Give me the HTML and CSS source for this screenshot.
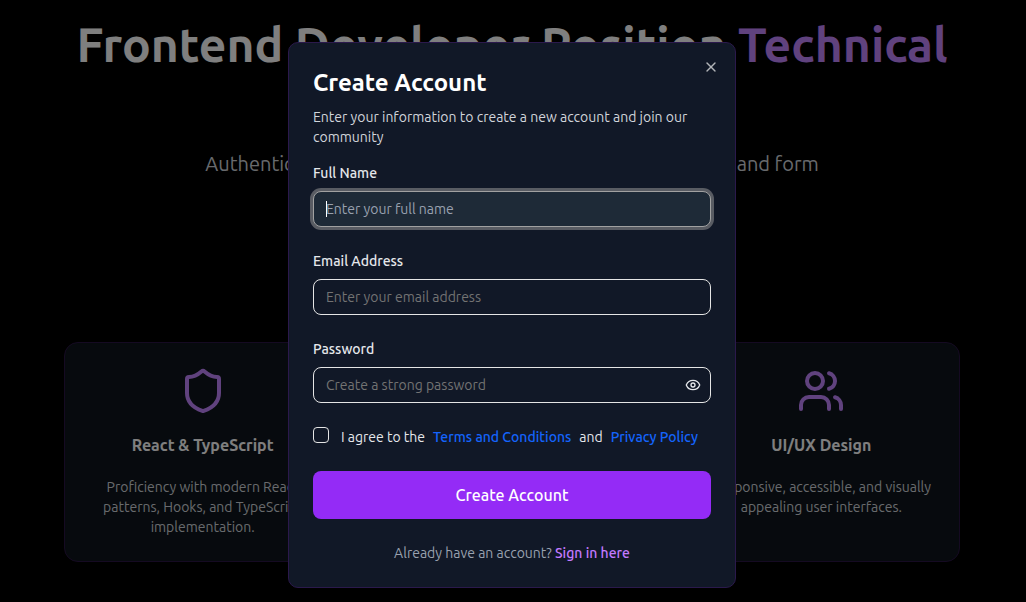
FILE: index.html
```html
<!DOCTYPE html>
<html lang="en">
<head>
<meta charset="utf-8">
<meta name="viewport" content="width=device-width, initial-scale=1">
<title>Create Account</title>
<link rel="stylesheet" href="styles.css">
</head>
<body>
<main class="page">
  <section class="hero">
    <h1 class="hero-title">Frontend Developer Position <span class="accent">Technical</span></h1>
    <p class="hero-text">Authentication system with clean, accessible modal dialogs and form</p>
  </section>
  <section class="cards">
    <article class="card">
      <svg class="card-icon" viewBox="0 0 24 24" aria-hidden="true"><path d="M20 13c0 5-3.5 7.5-7.66 8.95a1 1 0 0 1-.67-.01C7.5 20.5 4 18 4 13V6a1 1 0 0 1 1-1c2 0 4.5-1.2 6.24-2.72a1.17 1.17 0 0 1 1.52 0C14.51 3.81 17 5 19 5a1 1 0 0 1 1 1z"/></svg>
      <h2 class="card-title">React &amp; TypeScript</h2>
      <p class="card-text">Proficiency with modern React patterns, Hooks, and TypeScript implementation.</p>
    </article>
    <article class="card"></article>
    <article class="card">
      <svg class="card-icon" viewBox="0 0 24 24" aria-hidden="true"><path d="M16 21v-2a4 4 0 0 0-4-4H6a4 4 0 0 0-4 4v2"/><circle cx="9" cy="7" r="4"/><path d="M22 21v-2a4 4 0 0 0-3-3.87"/><path d="M16 3.13a4 4 0 0 1 0 7.75"/></svg>
      <h2 class="card-title">UI/UX Design</h2>
      <p class="card-text">Responsive, accessible, and visually appealing user interfaces.</p>
    </article>
  </section>
</main>
<div class="overlay">
  <div class="dialog" role="dialog" aria-modal="true" aria-labelledby="dialog-title">
    <button class="close" type="button" aria-label="Close"><svg class="icon" viewBox="0 0 24 24" aria-hidden="true"><path d="M18 6 6 18"/><path d="m6 6 12 12"/></svg></button>
    <header class="dialog-head">
      <h2 class="dialog-title" id="dialog-title">Create Account</h2>
      <p class="dialog-text">Enter your information to create a new account and join our community</p>
    </header>
    <form class="form">
      <div class="field">
        <label class="label" for="name">Full Name</label>
        <div class="control">
          <input class="input input-active" id="name" type="text" placeholder="Enter your full name">
          <span class="caret"></span>
        </div>
      </div>
      <div class="field">
        <label class="label" for="email">Email Address</label>
        <input class="input" id="email" type="email" placeholder="Enter your email address">
      </div>
      <div class="field">
        <label class="label" for="password">Password</label>
        <div class="control">
          <input class="input" id="password" type="password" placeholder="Create a strong password">
          <button class="reveal" type="button" aria-label="Show password"><svg class="icon" viewBox="0 0 24 24" aria-hidden="true"><path d="M2.06 12.35a1 1 0 0 1 0-.7 10.75 10.75 0 0 1 19.88 0 1 1 0 0 1 0 .7 10.75 10.75 0 0 1-19.88 0"/><circle cx="12" cy="12" r="3"/></svg></button>
        </div>
      </div>
      <div class="agree">
        <input class="checkbox" id="agree" type="checkbox">
        <div class="agree-text">
          <label for="agree">I agree to the</label>
          <a class="link" href="#">Terms and Conditions</a>
          <span>and</span>
          <a class="link" href="#">Privacy Policy</a>
        </div>
      </div>
      <button class="submit" type="submit">Create Account</button>
      <p class="signin">Already have an account? <a class="signin-link" href="#">Sign in here</a></p>
    </form>
  </div>
</div>
</body>
</html>
```
FILE: styles.css
```css
* { box-sizing: border-box; margin: 0; }
body {
  background: #000;
  color: #fff;
  font-family: Ubuntu, "Noto Sans", sans-serif;
  font-size: 14px;
  line-height: 20px;
  overflow: hidden;
}
button, input { font: inherit; color: inherit; }
a { text-decoration: none; }

.page { padding: 20px 34px 40px 32px; }
.hero { text-align: center; }
.hero-title { font-size: 48px; line-height: 48px; font-weight: 600; white-space: nowrap; }
.accent { color: #c084fc; }
.hero-text { margin-top: 82px; font-size: 20px; line-height: 28px; color: #d1d5db; }
.cards {
  display: grid;
  grid-template-columns: repeat(3, 1fr);
  gap: 32px;
  max-width: 896px;
  margin: 164px auto 0;
}
.card {
  display: flex;
  flex-direction: column;
  align-items: center;
  min-height: 220px;
  padding: 24px;
  border: 1px solid #2a1444;
  border-radius: 14px;
  background: #0e151c;
  text-align: center;
}
.card-icon {
  width: 48px;
  height: 48px;
  fill: none;
  stroke: #c084fc;
  stroke-width: 2;
  stroke-linecap: round;
  stroke-linejoin: round;
}
.card-title { margin-top: 16px; font-size: 16px; line-height: 28px; font-weight: 600; }
.card-text { margin-top: 18px; color: #d1d5db; }

.overlay {
  position: fixed;
  inset: 0;
  display: flex;
  justify-content: center;
  align-items: flex-start;
  padding: 42px 2px 0 0;
  background: rgba(0, 0, 0, 0.5);
}
.dialog {
  position: relative;
  width: 100%;
  max-width: 448px;
  padding: 24px;
  border: 1px solid #2b194c;
  border-radius: 10px;
  background: #111827;
}
.icon {
  display: block;
  width: 16px;
  height: 16px;
  fill: none;
  stroke: currentColor;
  stroke-width: 2;
  stroke-linecap: round;
  stroke-linejoin: round;
}
.close, .reveal { position: absolute; padding: 0; border: 0; background: none; }
.close { top: 16px; right: 16px; color: #b3b5b9; }
.dialog-title { font-size: 24px; line-height: 32px; font-weight: 600; }
.dialog-text { margin-top: 8px; color: #d1d5db; }
.form { display: grid; gap: 24px; margin-top: 16px; }
.field { display: grid; gap: 8px; }
.label { font-weight: 500; color: #e5e7eb; }
.control { position: relative; }
.input {
  display: block;
  width: 100%;
  height: 36px;
  padding: 0 12px;
  border: 1px solid #e5e5e5;
  border-radius: 8px;
  outline: none;
  background: transparent;
}
.input::placeholder { color: #737373; opacity: 1; }
.input-active {
  border-color: #a1a1a1;
  background: #1e2a37;
  box-shadow: 0 0 0 3px #595c63;
}
.input-active::placeholder { color: #99a1af; }
.caret {
  position: absolute;
  top: 10px;
  left: 13px;
  width: 1px;
  height: 16px;
  background: #fff;
}
.reveal { top: 10px; right: 10px; color: #e5e7eb; }
.agree { display: flex; align-items: flex-start; gap: 12px; }
.checkbox {
  appearance: none;
  width: 16px;
  height: 16px;
  border: 1px solid #e5e5e5;
  border-radius: 4px;
}
.agree-text { display: flex; flex-wrap: wrap; gap: 0 8px; color: #e5e7eb; }
.link { color: #1464fc; font-weight: 500; }
.submit {
  height: 48px;
  border: 0;
  border-radius: 8px;
  background: #942bf6;
  font-size: 16px;
  font-weight: 500;
}
.signin { text-align: center; color: #99a1af; }
.signin-link { color: #c27aff; font-weight: 500; }
```
